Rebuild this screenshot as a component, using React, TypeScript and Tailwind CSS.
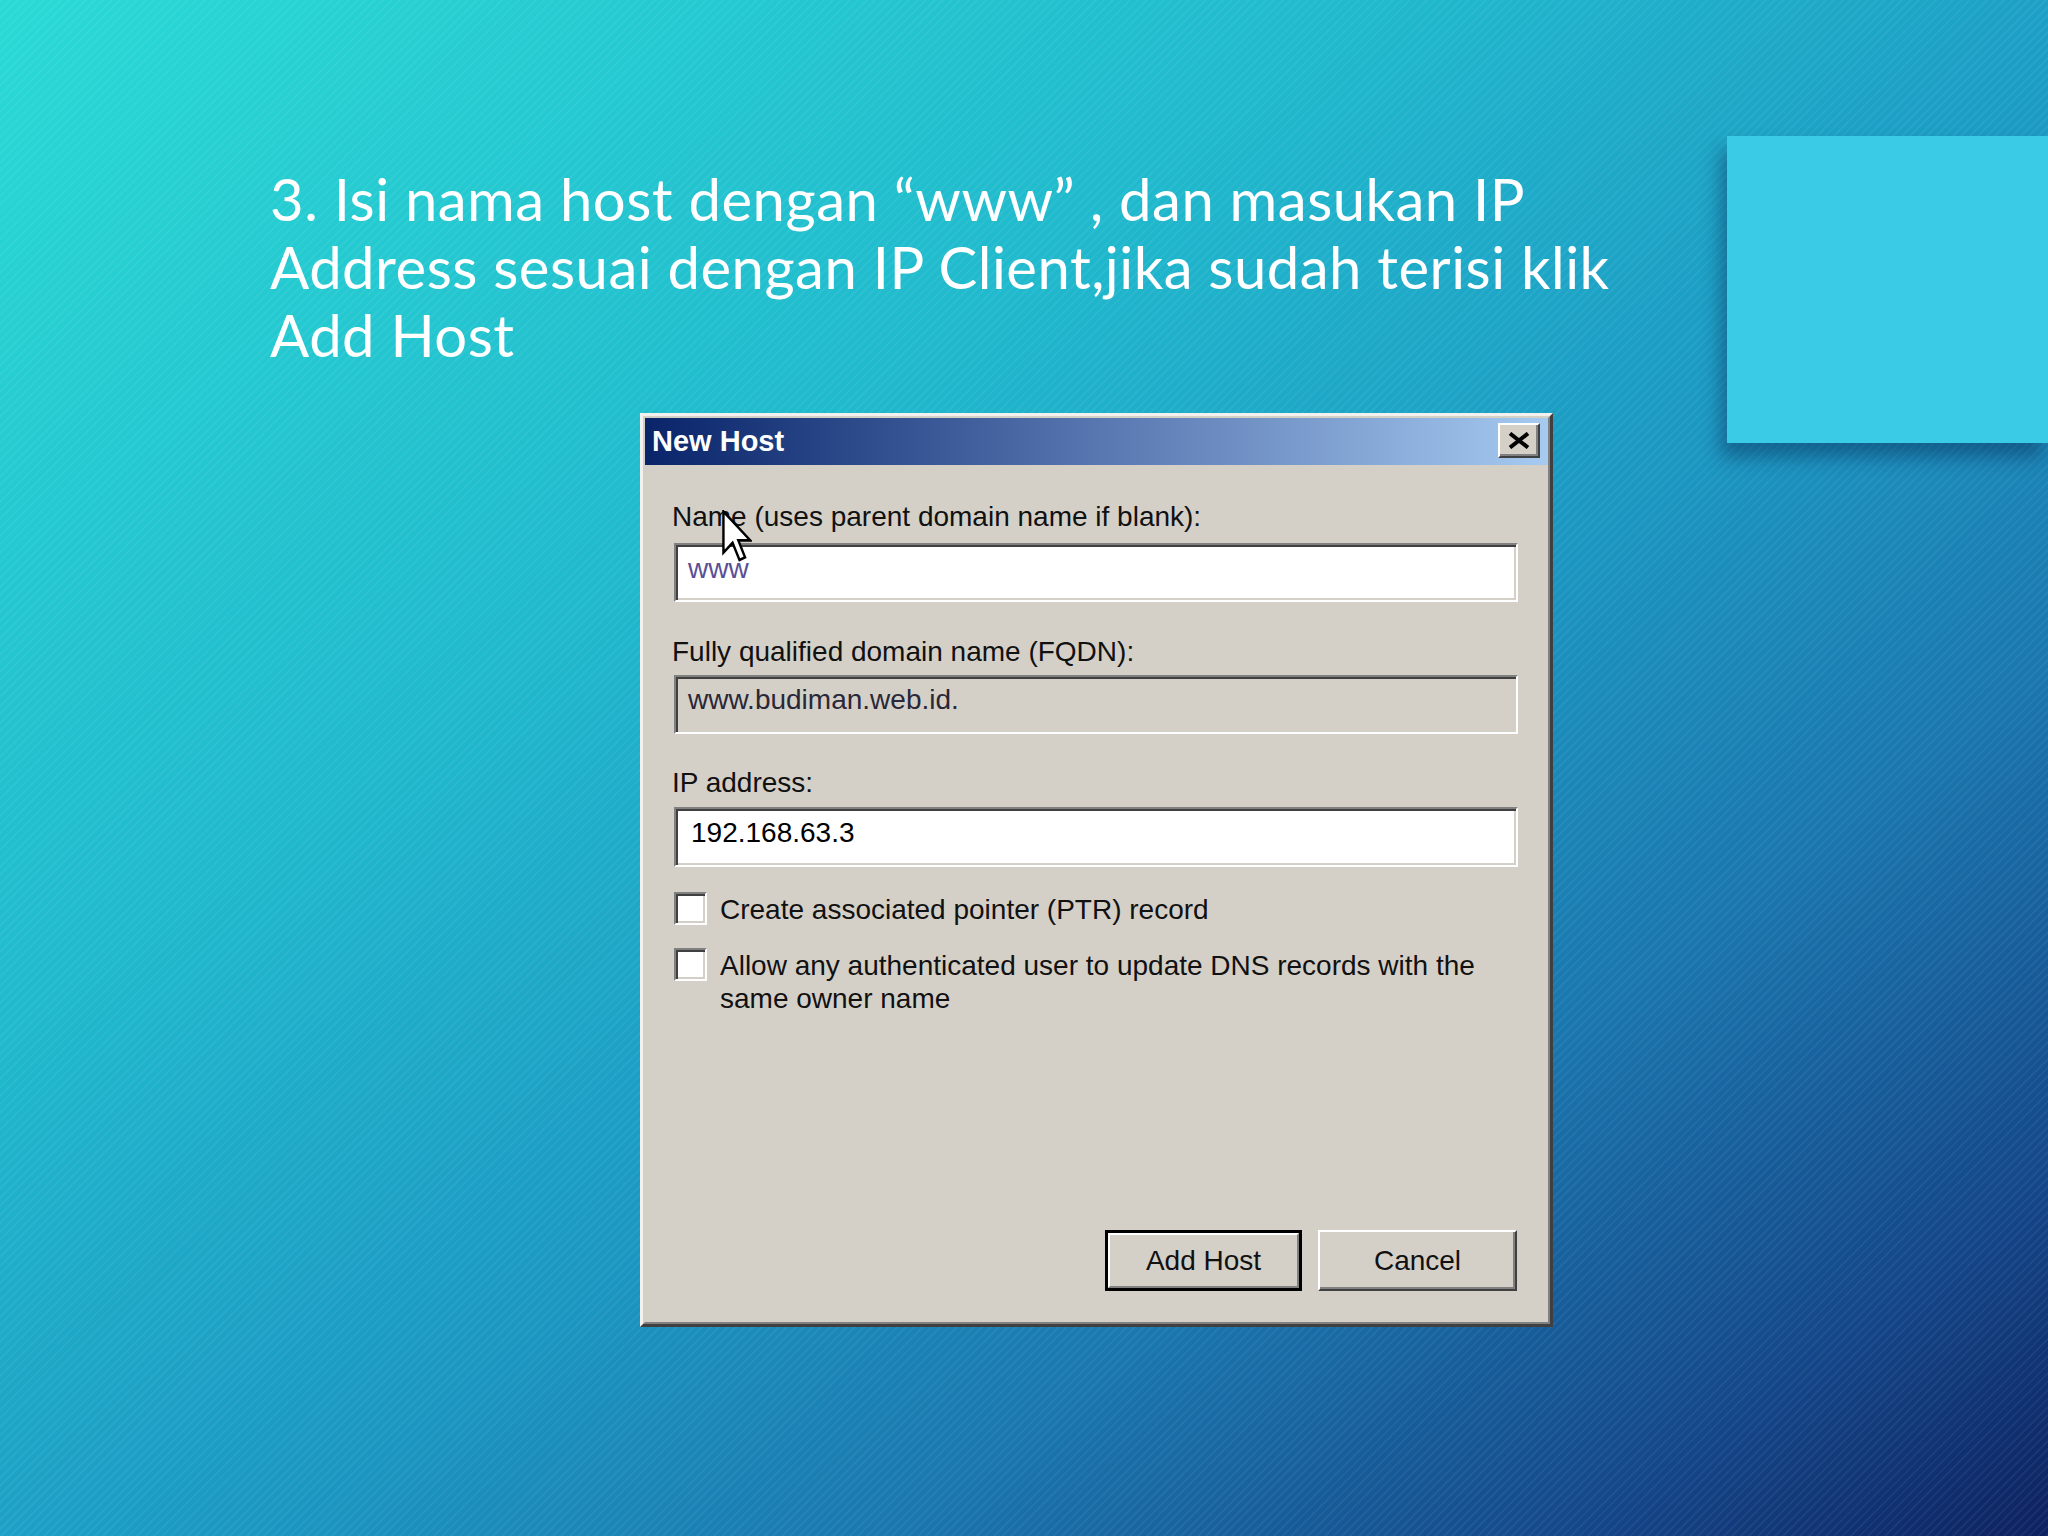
import React from "react";

function Sunken({ children, gray, h }: { children?: React.ReactNode; gray?: boolean; h: string }) {
  return (
    <div
      className={`ml-[2px] w-[844px] ${h} border-2 border-t-[#808080] border-l-[#808080] border-b-white border-r-white shadow-[inset_2px_2px_0_#404040,inset_-2px_-2px_0_#d4d0c8] ${
        gray ? "bg-[#d4d0c8]" : "bg-white"
      } pl-[12px]`}
    >
      {children}
    </div>
  );
}

function CheckBox() {
  return (
    <div className="w-[33px] h-[33px] shrink-0 bg-white border-2 border-t-[#808080] border-l-[#808080] border-b-white border-r-white shadow-[inset_2px_2px_0_#404040,inset_-2px_-2px_0_#d4d0c8]" />
  );
}

export default function App() {
  return (
    <div className="w-[2048px] h-[1536px] overflow-hidden flex bg-[image:repeating-linear-gradient(135deg,rgba(255,255,255,0.05)_0px,rgba(255,255,255,0.05)_2px,transparent_2px,transparent_6px),linear-gradient(to_bottom_right,#29dad5_0%,#20b9cd_34%,#1b97c2_56%,#1a76ae_72%,#14488a_88%,#0d2160_100%)]">
      <div className="flex-1 flex flex-col pl-[270px] pt-[165px]">
        <p className="font-['Lato',sans-serif] text-white text-[58px] leading-[68px] tracking-[0.5px] whitespace-nowrap">
          3. Isi nama host dengan “www” , dan masukan IP
          <br />
          Address sesuai dengan IP Client,jika sudah terisi klik
          <br />
          Add Host
        </p>

        <div className="relative mt-[44px] ml-[370px] w-[913px] h-[914px] bg-[#d4d0c8] border-[3px] border-t-[#f2f1ee] border-l-[#f2f1ee] border-b-[#404040] border-r-[#404040] font-['Liberation_Sans',Arial,sans-serif] text-[28px] leading-[34px] text-[#111]">
          <div className="h-full flex flex-col border-2 border-t-[#d4d0c8] border-l-[#d4d0c8] border-b-[#808080] border-r-[#808080]">
            <div className="h-[47px] shrink-0 flex items-start justify-between pl-[7px] pr-[8px] bg-gradient-to-r from-[#0a246a] via-[#5876b0] to-[#a6caf0]">
              <span className="font-bold text-[29px] leading-[47px] text-white">New Host</span>
              <div className="mt-[5px] w-[42px] h-[35px] flex items-center justify-center bg-[#d4d0c8] border-2 border-t-white border-l-white border-b-[#404040] border-r-[#404040] shadow-[inset_-2px_-2px_0_#808080]">
                <svg width="22" height="17" viewBox="0 0 22 17">
                  <path d="M2 1.5 L20 15.5 M20 1.5 L2 15.5" stroke="#000" strokeWidth="4" />
                </svg>
              </div>
            </div>

            <div className="flex-1 flex flex-col pl-[27px]">
              <div className="mt-[35px] h-[34px]">Name (uses parent domain name if blank):</div>
              <div className="mt-[9px]">
                <Sunken h="h-[59px]">
                  <div className="pt-[7px] text-[#5a4f96]">www</div>
                </Sunken>
              </div>

              <div className="mt-[33px] h-[34px]">Fully qualified domain name (FQDN):</div>
              <div className="mt-[6px]">
                <Sunken h="h-[59px]" gray>
                  <div className="pt-[6px] text-[#2a2838]">www.budiman.web.id.</div>
                </Sunken>
              </div>

              <div className="mt-[32px] h-[34px]">IP address:</div>
              <div className="mt-[7px]">
                <Sunken h="h-[60px]">
                  <div className="pt-[7px] pl-[3px] text-black">192.168.63.3</div>
                </Sunken>
              </div>

              <div className="mt-[25px] ml-[2px] flex gap-[13px] leading-[33px]">
                <CheckBox />
                <div className="pt-[1px]">Create associated pointer (PTR) record</div>
              </div>
              <div className="mt-[22px] ml-[2px] flex gap-[13px] leading-[33px]">
                <CheckBox />
                <div className="pt-[1px]">
                  Allow any authenticated user to update DNS records with the
                  <br />
                  same owner name
                </div>
              </div>

              <div className="mt-auto mb-[31px] pr-[31px] flex justify-end gap-[16px]">
                <div className="w-[197px] h-[61px] border-[3px] border-black bg-[#d4d0c8]">
                  <div className="h-full flex items-center justify-center border-2 border-t-white border-l-white border-b-[#808080] border-r-[#808080]">
                    Add Host
                  </div>
                </div>
                <div className="w-[199px] h-[61px] flex items-center justify-center bg-[#d4d0c8] border-2 border-t-white border-l-white border-b-[#404040] border-r-[#404040] shadow-[inset_-2px_-2px_0_#808080]">
                  Cancel
                </div>
              </div>
            </div>
          </div>

          <svg
            className="absolute left-[79px] top-[94px]"
            width="30"
            height="52"
            viewBox="0 0 12.5 20"
            preserveAspectRatio="none"
          >
            <path
              d="M0.6 0.6 L0.6 16.4 L4.4 12.6 L7.3 19.2 L9.6 18.2 L6.8 11.7 L11.8 11.7 Z"
              fill="#fff"
              stroke="#000"
              strokeWidth="1"
              strokeLinejoin="miter"
            />
          </svg>
        </div>
      </div>

      <div className="w-[321px] shrink-0 pt-[136px]">
        <div className="h-[307px] bg-[#3acbe6] shadow-[-6px_14px_18px_rgba(0,20,60,0.38)]" />
      </div>
    </div>
  );
}
